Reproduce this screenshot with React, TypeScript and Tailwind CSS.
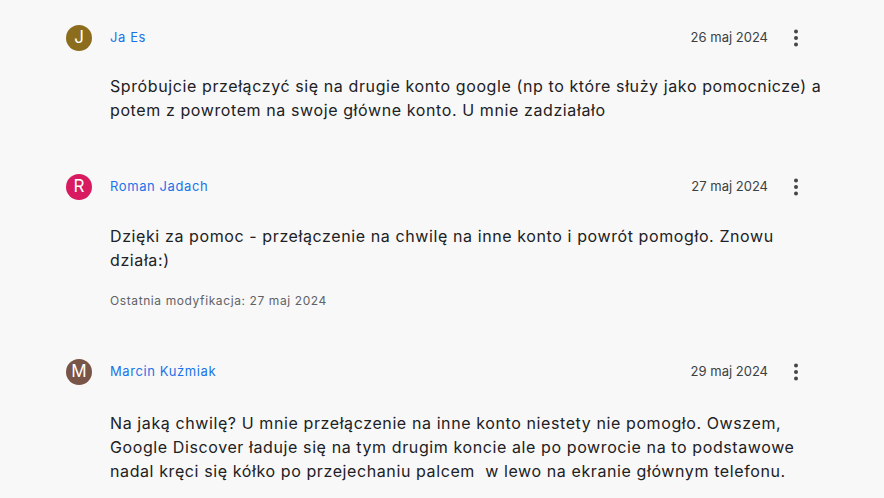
const comments = [
  {
    initial: 'J',
    color: 'bg-[#8b6d1d]',
    name: 'Ja Es',
    date: '26 maj 2024',
    body: 'Spróbujcie przełączyć się na drugie konto google (np to które służy jako pomocnicze) a potem z powrotem na swoje główne konto. U mnie zadziałało',
    gap: 'mt-4',
  },
  {
    initial: 'R',
    color: 'bg-[#d81b60]',
    name: 'Roman Jadach',
    date: '27 maj 2024',
    body: 'Dzięki za pomoc - przełączenie na chwilę na inne konto i powrót pomogło. Znowu działa:)',
    modified: 'Ostatnia modyfikacja: 27 maj 2024',
    gap: 'mt-[17px]',
  },
  {
    initial: 'M',
    color: 'bg-[#795548]',
    name: 'Marcin Kuźmiak',
    date: '29 maj 2024',
    body: 'Na jaką chwilę? U mnie przełączenie na inne konto niestety nie pomogło. Owszem, Google Discover ładuje się na tym drugim koncie ale po powrocie na to podstawowe nadal kręci się kółko po przejechaniu palcem  w lewo na ekranie głównym telefonu.',
    gap: 'mt-[19px]',
  },
];

function MoreIcon() {
  return (
    <svg viewBox="0 0 24 24" className="w-6 h-6 fill-[#444746]">
      <circle cx="12" cy="5.5" r="2" />
      <circle cx="12" cy="12" r="2" />
      <circle cx="12" cy="18.5" r="2" />
    </svg>
  );
}

export default function App() {
  return (
    <div
      className="min-h-screen bg-[#f8f8f8] pl-[66px] pr-[52px] pt-[18px]"
      style={{ fontFamily: 'Inter, Roboto, sans-serif' }}
    >
      <div className="flex flex-col gap-[45px]">
        {comments.map((c) => (
          <div key={c.name}>
            <div className="flex items-center h-10 pr-[24px]">
              <div
                className={`w-[26px] h-[26px] rounded-full ${c.color} flex items-center justify-center text-white text-[17px]`}
              >
                {c.initial}
              </div>
              <span className="ml-[18px] text-[13px] tracking-[0.6px] text-[#1a73e8]">{c.name}</span>
              <span className="ml-auto text-[13px] text-[#3c4043]">{c.date}</span>
              <span className="ml-4">
                <MoreIcon />
              </span>
            </div>
            <div className={`pl-[44px] ${c.gap}`}>
              <p className="text-base leading-6 tracking-[0.6px] text-[#202124] whitespace-pre-wrap">
                {c.body}
              </p>
              {c.modified && (
                <p className="mt-[21px] -mb-[2px] text-xs leading-4 tracking-[0.6px] text-[#5f6368]">
                  {c.modified}
                </p>
              )}
            </div>
          </div>
        ))}
      </div>
    </div>
  );
}
